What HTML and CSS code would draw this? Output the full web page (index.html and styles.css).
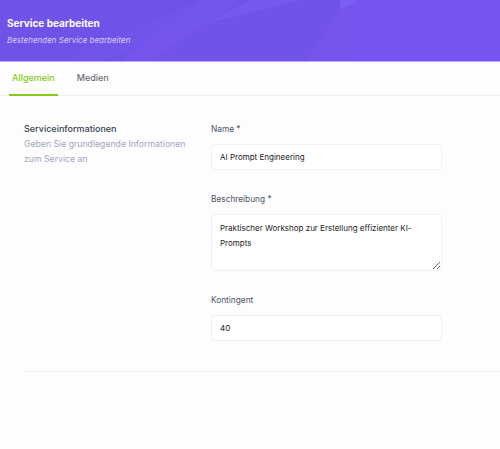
FILE: index.html
```html
<!DOCTYPE html>
<html lang="de">
<head>
    <meta charset="UTF-8">
    <meta name="viewport" content="width=device-width, initial-scale=1.0">
    <title>Service bearbeiten</title>
    <link rel="stylesheet" href="styles.css">
</head>
<body>
    <div class="header">
        <svg class="header-bg" viewBox="0 0 500 61" preserveAspectRatio="none">
            <polygon points="0,0 200,0 120,61 0,61" fill="#6f52e7"/>
            <polygon points="200,0 240,0 205,24 100,61 60,61" fill="#7456ec" opacity="0.7"/>
            <polygon points="205,24 240,0 340,0 340,10 307,61 150,61" fill="#7153e9"/>
            <polygon points="340,10 355,0 355,61 307,61" fill="#7555ee"/>
            <polygon points="340,0 360,0 340,10" fill="#7d5ef3"/>
            <polygon points="250,0 300,0 205,24" fill="#7b5bf0" opacity="0.8"/>
            <polygon points="355,0 500,0 500,61 355,61" fill="#7755f2"/>
        </svg>
        <div class="header-title">Service bearbeiten</div>
        <div class="header-sub">Bestehenden Service bearbeiten</div>
    </div>

    <div class="tabs">
        <div class="tab active">Allgemein</div>
        <div class="tab">Medien</div>
    </div>

    <div class="section">
        <div class="section-info">
            <h2>Serviceinformationen</h2>
            <p>Geben Sie grundlegende Informationen zum Service an</p>
        </div>
        <form class="section-form">
            <div class="form-group">
                <label>Name *</label>
                <input type="text" value="AI Prompt Engineering">
            </div>
            <div class="form-group">
                <label>Beschreibung *</label>
                <textarea rows="3">Praktischer Workshop zur Erstellung effizienter KI-Prompts</textarea>
            </div>
            <div class="form-group">
                <label>Kontingent</label>
                <input type="text" value="40">
            </div>
        </form>
    </div>

    <div class="divider"></div>
</body>
</html>
```

FILE: styles.css
```css
* {
    margin: 0;
    padding: 0;
    box-sizing: border-box;
    font-family: 'Inter', 'Noto Sans', sans-serif;
}

body {
    background: #fdfdfe;
    color: #1f2937;
    overflow: hidden;
}

.header {
    position: relative;
    height: 62px;
    padding: 16px 7px 0;
    background: #7555ee;
    border-bottom: 1px solid #b9a6fa;
    color: white;
    overflow: hidden;
}

.header-bg {
    position: absolute;
    top: 0;
    left: 0;
    width: 100%;
    height: 100%;
}

.header-title,
.header-sub {
    position: relative;
}

.header-title {
    font-size: 10px;
    font-weight: 700;
    line-height: 14px;
}

.header-sub {
    margin-top: 4px;
    font-size: 8px;
    font-style: italic;
    color: #d9cffc;
    line-height: 12px;
}

.tabs {
    display: flex;
    gap: 16px;
    padding: 0 9px;
    border-bottom: 1px solid #eeeeef;
}

.tab {
    padding: 9px 3px 10px;
    font-size: 9px;
    font-weight: 500;
    color: #6e6e73;
    line-height: 13px;
    border-bottom: 2px solid transparent;
    margin-bottom: -1px;
}

.tab.active {
    color: #84cc16;
    border-bottom-color: #84cc16;
}

.section {
    display: flex;
    padding: 26px 0 0 24px;
}

.section-info {
    width: 187px;
}

.section-info h2 {
    font-size: 9px;
    font-weight: 500;
    color: #374151;
    line-height: 14px;
}

.section-info p {
    max-width: 172px;
    margin-top: 1px;
    font-size: 8.7px;
    color: #a1a6c0;
    line-height: 15px;
}

.section-form {
    width: 231px;
    display: flex;
    flex-direction: column;
    gap: 22px;
}

.form-group label {
    display: block;
    font-size: 8.3px;
    font-weight: 400;
    color: #4b5563;
    line-height: 12px;
    margin: 1px 0 9px;
}

input,
textarea {
    display: block;
    width: 100%;
    padding: 0 8px;
    background: #ffffff;
    border: 1px solid #eef0f6;
    border-radius: 4px;
    font-size: 8px;
    color: #222;
    outline: none;
}

input {
    height: 26px;
}

textarea {
    height: 57px;
    padding-top: 6px;
    line-height: 15px;
    resize: vertical;
}

.divider {
    margin: 30px 0 0 24px;
    border-top: 1px solid #efeff1;
}
```
